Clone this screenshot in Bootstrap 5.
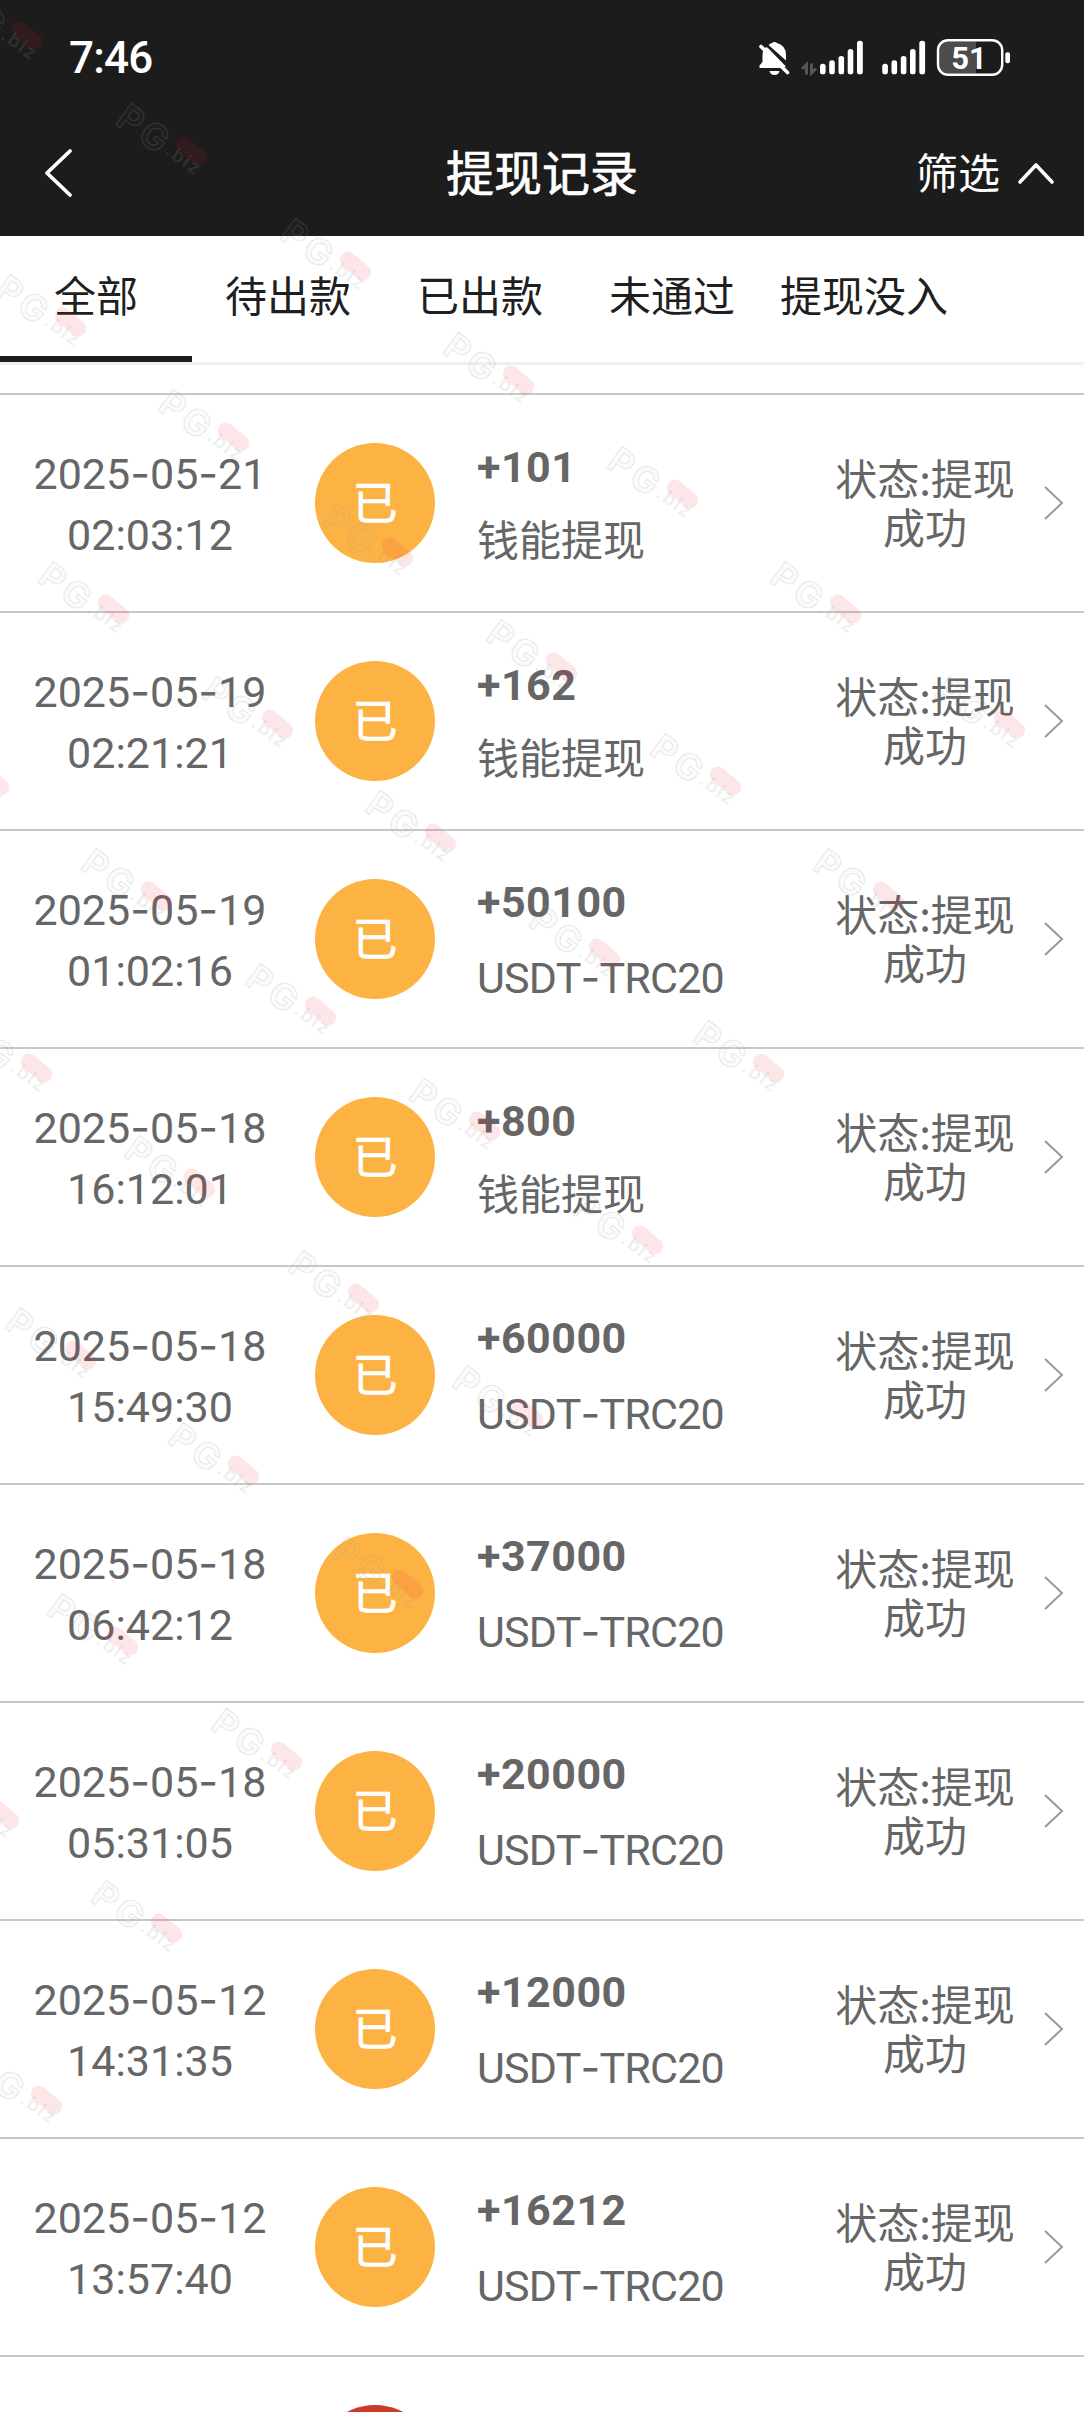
<!DOCTYPE html>
<html lang="zh-CN">
<head>
<meta charset="utf-8">
<meta name="viewport" content="width=device-width, initial-scale=1">
<title>提现记录</title>
<link rel="stylesheet" href="https://cdn.jsdelivr.net/npm/bootstrap@5.3.0/dist/css/bootstrap.min.css">
<style>
body{font-family:Roboto,"Noto Sans CJK SC",sans-serif;font-size:42px;color:#666;background:#fff}
.screen{height:2412px}
.topbar{background:#1c1c1c;color:#fff}
.statusbar{height:110px;padding:5px 72px 0 69px}
.clock{font-size:44px;font-weight:500;line-height:1;letter-spacing:-.8px}
.titlebar{height:126px;padding:0 28px 0 43px}
.side{width:200px}
.side-start{width:185px}
.page-title{font-size:48px;line-height:1;padding-top:4px;-webkit-text-stroke:.7px #fff}
.filter{line-height:1;padding-top:3px}
.tabs{height:129px;border-bottom:3px solid #f0f0f0}
.tabs .nav-link{width:192px;height:126px;padding:0 0 3px;color:#1f1f1f;border-radius:0;white-space:nowrap}
.tabs .nav-link.active{border-bottom:6px solid #1c1c1c;padding:3px 0 0}
.records{margin-top:28px;border-top:2px solid #c8c8c8}
.record{height:218px;border-bottom:2px solid #c8c8c8}
.when{width:300px;font-size:43px;line-height:61px;padding-top:2px}
.when .dh,.way .dh{font-family:Inter;font-weight:400}
.dot{width:120px;height:120px;margin-left:15px;background:#fdb344;color:#fff;font-size:45px;line-height:1;padding-top:2px;-webkit-text-stroke:.7px #fff}
.dot-fail{background:#cc3a2a}
.info{width:300px;margin-left:42px;padding-top:2px}
.sum{font-size:43px;font-weight:700;line-height:60px;margin-bottom:15px;letter-spacing:.5px}
.way{font-size:43px;line-height:60px;letter-spacing:-.8px}
.way-cn{font-size:42px;line-height:60px}
.state{width:190px;margin-left:53px;padding-bottom:4px;line-height:49px;word-break:break-all;font-family:"Noto Sans CJK SC",sans-serif}
.go{margin-left:22px}
.stamps{pointer-events:none}
</style>
</head>
<body>
<div class="screen position-relative overflow-hidden">
  <header class="topbar">
    <div class="statusbar d-flex align-items-center justify-content-between">
      <div class="clock">7:46</div>
      <svg width="254" height="40" viewBox="758 36 254 40" fill="#fff">
        <path d="M768 46 L786 64.500 L781 66 H759.500 V63.500 L762.500 60 V53 Q762.500 48 766 45 Z"/>
        <path d="M768.500 43 Q770 41.600 772 41 Q774.500 39 777 41 Q786 43.500 786 53 V58.500 Z"/>
        <path d="M769.500 69 H779.500 Q778.500 73 774.500 73 Q770.500 73 769.500 69Z"/>
        <path d="M761 44.500 L787.500 70.500" stroke="#fff" stroke-width="3.600" stroke-linecap="round"/>
        <g fill="none" stroke="#555" stroke-width="3"><path d="M802 67 L806.500 62.500 V72.500"/><path d="M811.500 61.500 V71 L816 66.500"/></g>
        <g id="sig"><rect x="820" y="61.700" width="5.600" height="10.600" rx="2.600"/><rect x="829.200" y="58.300" width="5.600" height="14" rx="2.600"/><rect x="838.500" y="54" width="5.600" height="18.300" rx="2.600"/><rect x="847.700" y="47" width="5.600" height="25.300" rx="2.600"/><rect x="857" y="38.700" width="5.800" height="33.600" rx="2.600"/></g>
        <use href="#sig" x="62.300"/>
        <path d="M976 39.500 V71.500 H948 Q939 71.500 939 62.500 V48.500 Q939 39.500 948 39.500Z" fill="#4c4c4c"/>
        <rect x="938" y="38.200" width="64.200" height="34.600" rx="10" fill="none" stroke="#fff" stroke-width="2.400"/>
        <rect x="1005.300" y="50.300" width="4.700" height="11" rx="2"/>
        <text x="969" y="66.800" text-anchor="middle" font-family="Roboto" font-weight="700" font-size="31">51</text>
      </svg>
    </div>
    <nav class="titlebar d-flex align-items-center justify-content-between">
      <div class="side-start d-flex">
        <svg width="32" height="52" viewBox="0 0 32 52" fill="none" stroke="#fff" stroke-width="3.800" stroke-linecap="round" stroke-linejoin="round"><path d="M27 4 L4 26 L27 48"/></svg>
      </div>
      <div class="page-title">提现记录</div>
      <div class="side d-flex align-items-center justify-content-end">
        <span class="filter">筛选</span>
        <svg class="ms-3" width="40" height="26" viewBox="0 0 40 26" fill="none" stroke="#fff" stroke-width="3.600" stroke-linecap="round" stroke-linejoin="round"><path d="M4 22 L20 5 L36 22"/></svg>
      </div>
    </nav>
  </header>

  <nav class="tabs nav flex-nowrap">
    <a class="nav-link active d-flex align-items-center justify-content-center">全部</a>
    <a class="nav-link d-flex align-items-center justify-content-center">待出款</a>
    <a class="nav-link d-flex align-items-center justify-content-center">已出款</a>
    <a class="nav-link d-flex align-items-center justify-content-center">未通过</a>
    <a class="nav-link d-flex align-items-center justify-content-center">提现没入</a>
  </nav>

  <main class="records">
    <div class="record d-flex align-items-center">
      <div class="when text-center">2025<span class="dh">-</span>05<span class="dh">-</span>21<br>02:03:12</div>
      <div class="dot rounded-circle d-flex align-items-center justify-content-center">已</div>
      <div class="info"><div class="sum">+101</div><div class="way-cn">钱能提现</div></div>
      <div class="state text-center">状态:提现成功</div>
      <svg class="go" width="22" height="36" viewBox="0 0 22 36" fill="none" stroke="#999" stroke-width="2"><path d="M3 2 L20 18 L3 34"/></svg>
    </div>
    <div class="record d-flex align-items-center">
      <div class="when text-center">2025<span class="dh">-</span>05<span class="dh">-</span>19<br>02:21:21</div>
      <div class="dot rounded-circle d-flex align-items-center justify-content-center">已</div>
      <div class="info"><div class="sum">+162</div><div class="way-cn">钱能提现</div></div>
      <div class="state text-center">状态:提现成功</div>
      <svg class="go" width="22" height="36" viewBox="0 0 22 36" fill="none" stroke="#999" stroke-width="2"><path d="M3 2 L20 18 L3 34"/></svg>
    </div>
    <div class="record d-flex align-items-center">
      <div class="when text-center">2025<span class="dh">-</span>05<span class="dh">-</span>19<br>01:02:16</div>
      <div class="dot rounded-circle d-flex align-items-center justify-content-center">已</div>
      <div class="info"><div class="sum">+50100</div><div class="way">USDT<span class="dh">-</span>TRC20</div></div>
      <div class="state text-center">状态:提现成功</div>
      <svg class="go" width="22" height="36" viewBox="0 0 22 36" fill="none" stroke="#999" stroke-width="2"><path d="M3 2 L20 18 L3 34"/></svg>
    </div>
    <div class="record d-flex align-items-center">
      <div class="when text-center">2025<span class="dh">-</span>05<span class="dh">-</span>18<br>16:12:01</div>
      <div class="dot rounded-circle d-flex align-items-center justify-content-center">已</div>
      <div class="info"><div class="sum">+800</div><div class="way-cn">钱能提现</div></div>
      <div class="state text-center">状态:提现成功</div>
      <svg class="go" width="22" height="36" viewBox="0 0 22 36" fill="none" stroke="#999" stroke-width="2"><path d="M3 2 L20 18 L3 34"/></svg>
    </div>
    <div class="record d-flex align-items-center">
      <div class="when text-center">2025<span class="dh">-</span>05<span class="dh">-</span>18<br>15:49:30</div>
      <div class="dot rounded-circle d-flex align-items-center justify-content-center">已</div>
      <div class="info"><div class="sum">+60000</div><div class="way">USDT<span class="dh">-</span>TRC20</div></div>
      <div class="state text-center">状态:提现成功</div>
      <svg class="go" width="22" height="36" viewBox="0 0 22 36" fill="none" stroke="#999" stroke-width="2"><path d="M3 2 L20 18 L3 34"/></svg>
    </div>
    <div class="record d-flex align-items-center">
      <div class="when text-center">2025<span class="dh">-</span>05<span class="dh">-</span>18<br>06:42:12</div>
      <div class="dot rounded-circle d-flex align-items-center justify-content-center">已</div>
      <div class="info"><div class="sum">+37000</div><div class="way">USDT<span class="dh">-</span>TRC20</div></div>
      <div class="state text-center">状态:提现成功</div>
      <svg class="go" width="22" height="36" viewBox="0 0 22 36" fill="none" stroke="#999" stroke-width="2"><path d="M3 2 L20 18 L3 34"/></svg>
    </div>
    <div class="record d-flex align-items-center">
      <div class="when text-center">2025<span class="dh">-</span>05<span class="dh">-</span>18<br>05:31:05</div>
      <div class="dot rounded-circle d-flex align-items-center justify-content-center">已</div>
      <div class="info"><div class="sum">+20000</div><div class="way">USDT<span class="dh">-</span>TRC20</div></div>
      <div class="state text-center">状态:提现成功</div>
      <svg class="go" width="22" height="36" viewBox="0 0 22 36" fill="none" stroke="#999" stroke-width="2"><path d="M3 2 L20 18 L3 34"/></svg>
    </div>
    <div class="record d-flex align-items-center">
      <div class="when text-center">2025<span class="dh">-</span>05<span class="dh">-</span>12<br>14:31:35</div>
      <div class="dot rounded-circle d-flex align-items-center justify-content-center">已</div>
      <div class="info"><div class="sum">+12000</div><div class="way">USDT<span class="dh">-</span>TRC20</div></div>
      <div class="state text-center">状态:提现成功</div>
      <svg class="go" width="22" height="36" viewBox="0 0 22 36" fill="none" stroke="#999" stroke-width="2"><path d="M3 2 L20 18 L3 34"/></svg>
    </div>
    <div class="record d-flex align-items-center">
      <div class="when text-center">2025<span class="dh">-</span>05<span class="dh">-</span>12<br>13:57:40</div>
      <div class="dot rounded-circle d-flex align-items-center justify-content-center">已</div>
      <div class="info"><div class="sum">+16212</div><div class="way">USDT<span class="dh">-</span>TRC20</div></div>
      <div class="state text-center">状态:提现成功</div>
      <svg class="go" width="22" height="36" viewBox="0 0 22 36" fill="none" stroke="#999" stroke-width="2"><path d="M3 2 L20 18 L3 34"/></svg>
    </div>
    <div class="record d-flex align-items-center">
      <div class="when"></div>
      <div class="dot dot-fail rounded-circle"></div>
    </div>
  </main>

  <!-- repeated diagonal watermark -->
  <svg class="stamps position-absolute top-0 start-0" width="1084" height="2412" viewBox="0 0 1084 2412" aria-hidden="true">
    <defs>
      <g id="wm">
        <g transform="translate(0 23) rotate(36)" font-family="Inter">
          <text x="0" y="0" font-size="36" font-weight="700" letter-spacing="4" fill="#999" fill-opacity=".05" stroke="#999" stroke-opacity=".2" stroke-width="1.200">PG</text>
          <text x="58" y="-5" font-size="19" font-weight="600" letter-spacing="1.500" fill="#999" fill-opacity=".17">.biz</text>
        </g>
        <rect x="-18" y="-8" width="36" height="16" rx="8" transform="translate(77.500 51) rotate(40)" fill="#e0182d" fill-opacity=".11"/>
      </g>
    </defs>
    <use href="#wm" x="-50" y="-15"/><use href="#wm" x="114" y="100"/><use href="#wm" x="278" y="215"/><use href="#wm" x="441" y="329"/><use href="#wm" x="605" y="443"/><use href="#wm" x="768" y="558"/><use href="#wm" x="932" y="673"/>
    <use href="#wm" x="-7" y="271"/><use href="#wm" x="156" y="386"/><use href="#wm" x="320" y="501"/><use href="#wm" x="484" y="616"/><use href="#wm" x="648" y="730"/><use href="#wm" x="811" y="845"/>
    <use href="#wm" x="36" y="558"/><use href="#wm" x="200" y="673"/><use href="#wm" x="363" y="787"/><use href="#wm" x="527" y="902"/><use href="#wm" x="691" y="1017"/>
    <use href="#wm" x="-84" y="730"/><use href="#wm" x="79" y="845"/><use href="#wm" x="243" y="960"/><use href="#wm" x="407" y="1075"/><use href="#wm" x="570" y="1189"/>
    <use href="#wm" x="-41" y="1017"/><use href="#wm" x="122" y="1132"/><use href="#wm" x="286" y="1247"/><use href="#wm" x="450" y="1362"/>
    <use href="#wm" x="3" y="1304"/><use href="#wm" x="166" y="1419"/><use href="#wm" x="330" y="1533"/>
    <use href="#wm" x="45" y="1590"/><use href="#wm" x="209" y="1705"/>
    <use href="#wm" x="-74" y="1763"/><use href="#wm" x="89" y="1877"/><use href="#wm" x="-31" y="2049"/>
  </svg>
</div>
<script src="https://cdn.jsdelivr.net/npm/bootstrap@5.3.0/dist/js/bootstrap.bundle.min.js"></script>
</body>
</html>
